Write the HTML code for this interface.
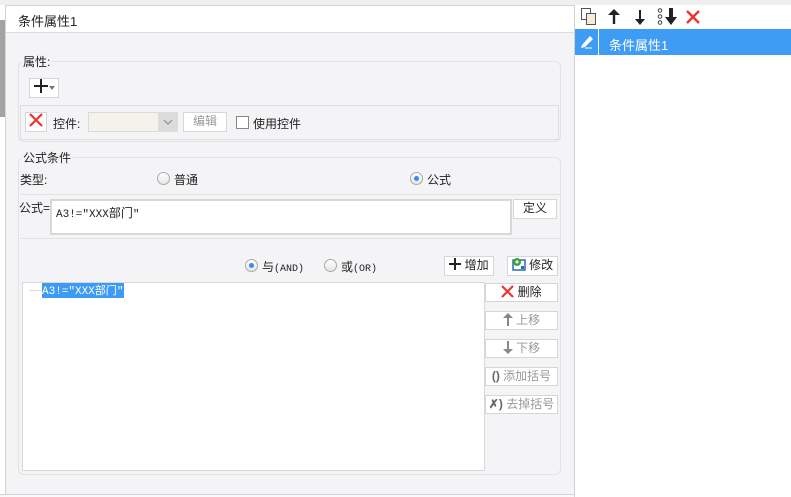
<!DOCTYPE html>
<html><head><meta charset="utf-8"><style>
*{box-sizing:border-box;margin:0;padding:0}
body{width:791px;height:497px;overflow:hidden;background:#fff;font-family:"Liberation Sans","Noto Sans CJK SC",sans-serif;font-size:12px;color:#222;position:relative}
.a{position:absolute}
.btn{position:absolute;background:#fff;border:1px solid #d6d6d6;text-align:center;line-height:17px;font-size:12px}
.dis{color:#999}
.btn svg{vertical-align:-2px}
.radio{position:absolute;width:13px;height:13px;border-radius:50%;border:1px solid #aaa;background:linear-gradient(#fff,#e6e6e6)}
.radio.on::after{content:"";position:absolute;left:3px;top:3px;width:5px;height:5px;border-radius:50%;background:#3b8cf0}
.fs{position:absolute;border:1px solid #e2e2e4;border-radius:6px}
.lg{position:absolute;background:#f4f4f6;padding:0 2px;line-height:14px}
</style></head><body>
<div class="a" style="left:0;top:0;width:791px;height:5px;background:#efefef"></div>
<div class="a" style="left:0;top:20px;width:5px;height:97px;background:#a3a3a3"></div>
<div class="a" style="left:0;top:494px;width:574px;height:3px;background:#fafafa;border-top:1px solid #d0d0d0"></div>
<div class="a" style="left:5px;top:5px;width:570px;height:490px;background:#f4f4f6;border:1px solid #d4d4d4"></div>
<div class="a" style="left:6px;top:6px;width:568px;height:27px;background:#fff;border-bottom:1px solid #dcdcdc"></div>
<div class="a" style="left:18px;top:11px;font-size:13px">条件属性1</div>

<div class="fs" style="left:18px;top:61px;width:543px;height:81px"></div>
<div class="lg" style="left:21px;top:55px">属性:</div>
<div class="btn" style="left:29px;top:78px;width:30px;height:20px;text-align:left;padding-left:4px"><svg width="14" height="14" viewBox="0 0 14 14"><path d="M7 0V14M0 7H14" stroke="#222" stroke-width="2"/></svg><svg width="6" height="4" viewBox="0 0 6 4" style="vertical-align:1px;margin-left:1px"><path d="M0 0H6L3 4Z" fill="#777"/></svg></div>
<div class="a" style="left:20px;top:105px;width:539px;height:35px;border:1px solid #dedede"></div>
<div class="btn" style="left:25px;top:112px;width:22px;height:20px"><svg width="14" height="14" viewBox="0 0 14 14" style="vertical-align:-1px"><path d="M1 1L13 13M13 1L1 13" stroke="#e33" stroke-width="2.2"/></svg></div>
<div class="a" style="left:53px;top:115px">控件:</div>
<div class="a" style="left:88px;top:112px;width:90px;height:20px;background:#f3f3ec;border:1px solid #dadada"></div>
<div class="a" style="left:158px;top:112px;width:20px;height:20px;background:#dcdcdc"><svg width="20" height="20"><path d="M6 8L10 12L14 8" stroke="#888" fill="none"/></svg></div>
<div class="btn dis" style="left:183px;top:112px;width:44px;height:20px">编辑</div>
<div class="a" style="left:236px;top:116px;width:13px;height:13px;border:1px solid #888;background:#fff"></div>
<div class="a" style="left:253px;top:115px">使用控件</div>

<div class="fs" style="left:18px;top:157px;width:543px;height:318px"></div>
<div class="lg" style="left:21px;top:151px">公式条件</div>
<div class="a" style="left:20px;top:171px">类型:</div>
<div class="radio" style="left:157px;top:172px"></div>
<div class="a" style="left:174px;top:171px">普通</div>
<div class="radio on" style="left:410px;top:172px"></div>
<div class="a" style="left:427px;top:171px">公式</div>
<div class="a" style="left:20px;top:194px;width:540px;height:1px;background:#e2e2e2"></div>
<div class="a" style="left:19px;top:199px">公式=</div>
<div class="a" style="left:50px;top:199px;width:462px;height:36px;background:#fff;border:2px solid #d8d8d8;padding:3px 4px;font-size:11px;font-family:'Liberation Mono','Noto Sans CJK SC',monospace">A3!="XXX<span style="font-family:'Noto Sans CJK SC',sans-serif;font-size:12px">部门</span>"</div>
<div class="btn" style="left:513px;top:199px;width:44px;height:20px">定义</div>
<div class="a" style="left:20px;top:238px;width:540px;height:1px;background:#e2e2e2"></div>
<div class="radio on" style="left:245px;top:259px"></div>
<div class="a" style="left:262px;top:258px">与<span style="font-size:10px;font-family:'Liberation Mono',monospace">(AND)</span></div>
<div class="radio" style="left:324px;top:259px"></div>
<div class="a" style="left:341px;top:258px">或<span style="font-size:10px;font-family:'Liberation Mono',monospace">(OR)</span></div>
<div class="btn" style="left:444px;top:256px;width:50px;height:20px"><svg width="12" height="12" viewBox="0 0 12 12" style="vertical-align:-1px"><path d="M6 0V12M0 6H12" stroke="#222" stroke-width="2"/></svg> 增加</div>
<div class="btn" style="left:507px;top:256px;width:51px;height:20px"><svg width="14" height="14" viewBox="0 0 14 14"><rect x="1" y="3" width="12" height="10" fill="#fff" stroke="#2a6db5" stroke-width="1.5"/><circle cx="5" cy="5" r="4" fill="#3aa53a"/><circle cx="5" cy="5" r="1.5" fill="#fff"/><rect x="9" y="9" width="3" height="3" fill="#2a6db5"/></svg> 修改</div>
<div class="a" style="left:22px;top:282px;width:463px;height:189px;background:#fff;border:1px solid #d8d8d8"></div>
<div class="a" style="left:29px;top:290px;width:12px;height:1px;background:#ddd"></div>
<div class="a" style="left:42px;top:283px;width:82px;height:15px;background:#3d9bf5;color:#fff;font-size:11px;line-height:15px;font-family:'Liberation Mono','Noto Sans CJK SC',monospace">A3!="XXX<span style="font-family:'Noto Sans CJK SC',sans-serif">部门</span>"</div>
<div class="btn" style="left:485px;top:283px;width:73px;height:19px"><svg width="13" height="13" viewBox="0 0 13 13"><path d="M1 1L12 12M12 1L1 12" stroke="#e33" stroke-width="2.2"/></svg> 删除</div>
<div class="btn dis" style="left:485px;top:311px;width:73px;height:19px"><svg width="10" height="13" viewBox="0 0 10 13"><path d="M5 13V3" stroke="#888" stroke-width="2"/><path d="M0 5L5 0L10 5Z" fill="#888"/></svg> 上移</div>
<div class="btn dis" style="left:485px;top:339px;width:73px;height:19px"><svg width="10" height="13" viewBox="0 0 10 13"><path d="M5 0V10" stroke="#888" stroke-width="2"/><path d="M0 8L5 13L10 8Z" fill="#888"/></svg> 下移</div>
<div class="btn dis" style="left:485px;top:367px;width:73px;height:19px"><b style="color:#666">()</b> 添加括号</div>
<div class="btn dis" style="left:485px;top:395px;width:73px;height:19px"><b style="color:#666">✗)</b> 去掉括号</div>

<div class="a" style="left:574px;top:5px;width:217px;height:492px;background:#fff;border-left:1px solid #d4d4d4"></div>
<div class="a" style="left:581px;top:8px;width:10px;height:12px;border:1px solid #555;background:#fff"></div>
<div class="a" style="left:586px;top:13px;width:10px;height:12px;border:1px solid #555;background:#f6ecd6"></div>
<svg class="a" style="left:608px;top:9px" width="12" height="15" viewBox="0 0 12 15"><path d="M6 15V4" stroke="#222" stroke-width="2.4"/><path d="M0 6L6 0L12 6Z" fill="#222"/></svg>
<svg class="a" style="left:634px;top:10px" width="12" height="15" viewBox="0 0 12 15"><path d="M6 0V11" stroke="#222" stroke-width="2"/><path d="M1 9L6 15L11 9Z" fill="#222"/></svg>
<svg class="a" style="left:657px;top:8px" width="22" height="17" viewBox="0 0 22 17"><circle cx="3" cy="2.5" r="1.8" fill="none" stroke="#444"/><circle cx="3" cy="8.5" r="1.8" fill="none" stroke="#444"/><circle cx="3" cy="14.5" r="1.8" fill="none" stroke="#444"/><path d="M14 0V11" stroke="#222" stroke-width="4"/><path d="M8 9L14 17L20 9Z" fill="#222"/></svg>
<svg class="a" style="left:686px;top:10px" width="14" height="14" viewBox="0 0 14 14"><path d="M1 1L13 13M13 1L1 13" stroke="#e33" stroke-width="2.4"/></svg>
<div class="a" style="left:575px;top:29px;width:216px;height:26px;background:#3f9cf5"></div>
<div class="a" style="left:598px;top:29px;width:1px;height:26px;background:#fff"></div>
<svg class="a" style="left:579px;top:33px" width="16" height="16" viewBox="0 0 16 16"><path d="M3 12L11 3L14 6L6 14L2 15Z" fill="#fff"/><path d="M6 15H13" stroke="#fff"/></svg>
<div class="a" style="left:609px;top:35px;color:#fff;font-size:13px">条件属性1</div>
</body></html>
